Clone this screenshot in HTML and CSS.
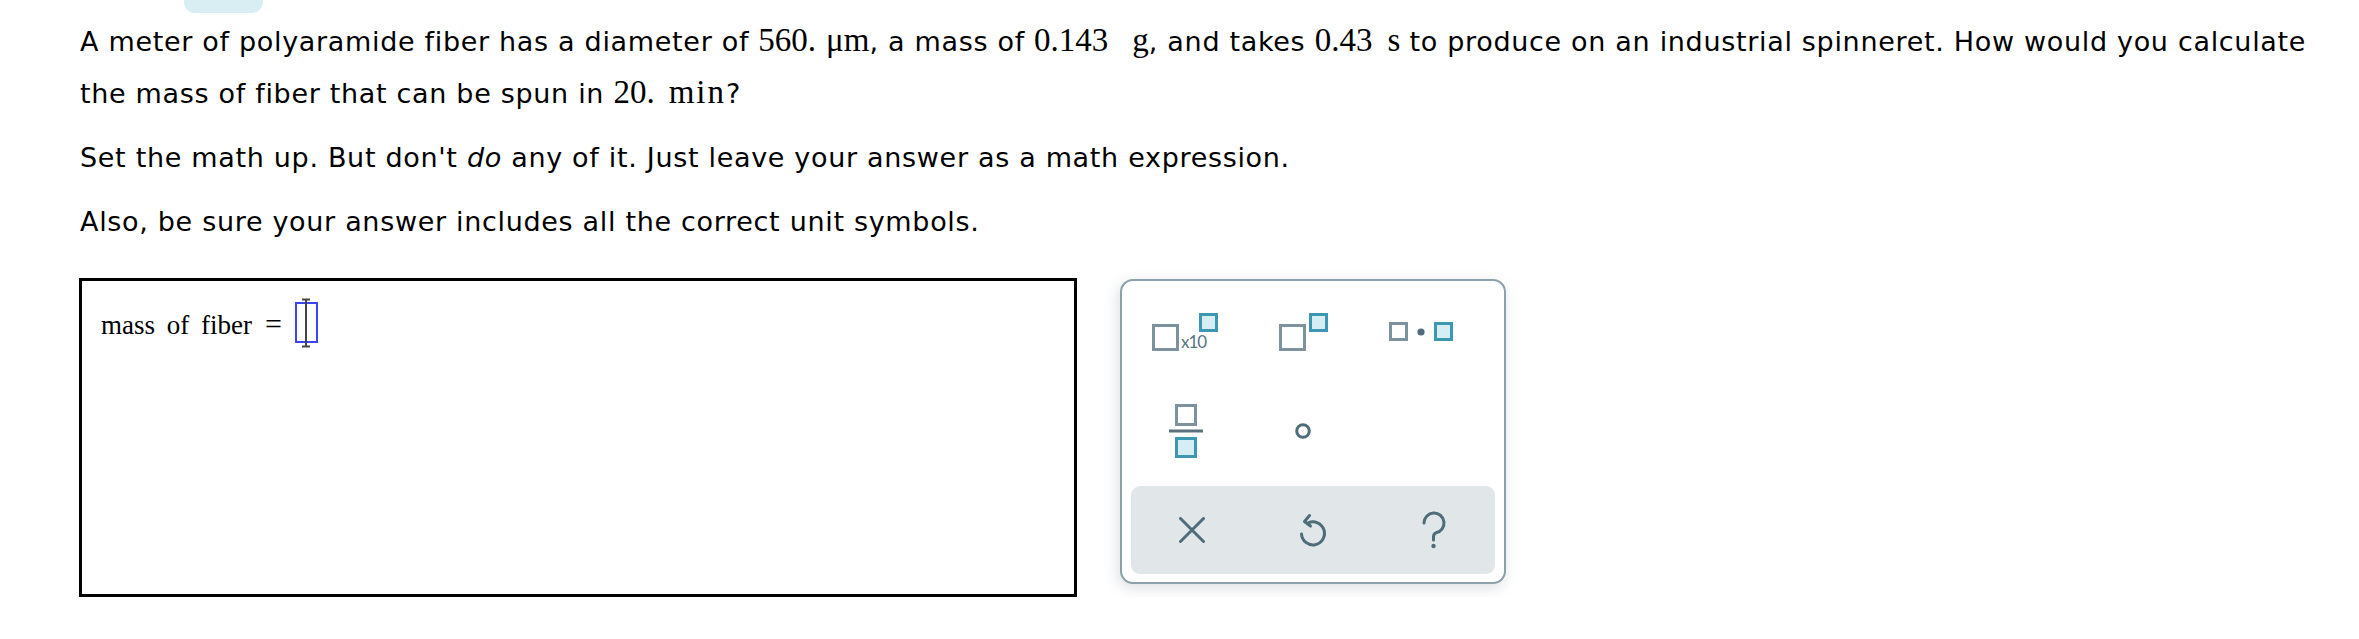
FILE: index.html
```html
<!DOCTYPE html>
<html>
<head>
<meta charset="utf-8">
<link rel="stylesheet" href="styles.css">
</head>
<body>
<div class="tab"></div>
<div class="question">
  <p class="para">A meter of polyaramide fiber has a diameter of <span class="m">560.</span><span class="m u1">μm</span>, a mass of <span class="m">0.143</span><span class="m u2">g</span>, and takes <span class="m">0.43</span><span class="m u3">s</span> to produce on an industrial spinneret. How would you calculate the mass of fiber that can be spun in <span class="m">20.</span><span class="m u4">min</span>?</p>
  <p class="para">Set the math up. But don't <em>do</em> any of it. Just leave your answer as a math expression.</p>
  <p class="para">Also, be sure your answer includes all the correct unit symbols.</p>
</div>
<div class="answer-row">
  <div class="answer-box">
    <div class="eq"><span class="lbl">mass of fiber</span><span class="equals">=</span><span class="slot"><svg class="ibeam" width="12" height="50" viewBox="0 0 12 50"><path d="M2 1.5 H10 M6 1.5 V48.5 M2 48.5 H10" stroke="#444" stroke-width="2" fill="none"/></svg></span></div>
  </div>
  <div class="palette">
    <div class="cell">
      <svg width="80" height="38" viewBox="0 0 80 38">
        <rect x="1.5" y="12.5" width="24" height="24" class="g"/>
        <text x="29" y="35" class="x10">x10</text>
        <rect x="48.5" y="1.5" width="16" height="16" class="b"/>
      </svg>
    </div>
    <div class="cell">
      <svg width="68" height="38" viewBox="0 0 68 38">
        <rect x="1.5" y="12.5" width="24" height="24" class="g"/>
        <rect x="31.5" y="1.5" width="16" height="16" class="b"/>
      </svg>
    </div>
    <div class="cell">
      <svg width="90" height="20" viewBox="0 0 90 20">
        <rect x="1.5" y="1.5" width="16" height="16" class="g"/>
        <circle cx="32" cy="10" r="3.6" class="dot"/>
        <rect x="46.5" y="1.5" width="16" height="16" class="b"/>
      </svg>
    </div>
    <div class="cell">
      <svg width="46" height="54" viewBox="0 0 46 54">
        <rect x="7.5" y="1.5" width="19" height="19" class="g"/>
        <path d="M0 27 H34" class="ln"/>
        <rect x="7.5" y="34.5" width="19" height="18" class="b"/>
      </svg>
    </div>
    <div class="cell">
      <svg width="56" height="20" viewBox="0 0 56 20">
        <circle cx="18" cy="10" r="6.3" class="deg"/>
      </svg>
    </div>
    <div class="cell"></div>
    <div class="tools">
      <div class="tool">
        <svg width="26" height="26" viewBox="0 0 26 26"><path d="M1.5 1.5 L24.5 24.5 M24.5 1.5 L1.5 24.5" class="ic"/></svg>
      </div>
      <div class="tool">
        <svg width="30" height="36" viewBox="0 0 30 36"><path d="M10 11 A11.5 11.5 0 1 1 3.5 22" class="ic"/><path d="M11.5 3.5 L6.5 9.5 L12.5 14" class="ic"/></svg>
      </div>
      <div class="tool">
        <svg width="26" height="38" viewBox="0 0 26 38"><path d="M3 12 A10 10 0 1 1 15 21.8 C13.5 22.3 12.5 23.5 12.5 26 V29" class="ic"/><circle cx="12.5" cy="35" r="2.2" class="dot"/></svg>
      </div>
    </div>
  </div>
</div>
</body>
</html>
```
FILE: styles.css
```css
html, body {
  margin: 0;
  padding: 0;
  background: #ffffff;
}
body {
  padding: 0 30px 0 80px;
  font-family: "DejaVu Sans", Verdana, sans-serif;
  font-size: 27px;
  color: #000;
}
.tab {
  margin-left: 104px;
  width: 79px;
  height: 13px;
  background: #d8eef3;
  border-radius: 0 0 11px 11px;
}
.question {
  padding-top: 2px;
}
.para {
  margin: 0 0 14px 0;
  line-height: 50px;
  letter-spacing: 0.68px;
}
.para em {
  font-style: italic;
}
.m {
  font-family: "Liberation Serif", "Times New Roman", serif;
  font-size: 33px;
  letter-spacing: 0;
}
.u1 {
  margin-left: 10px;
}
.u2 {
  margin-left: 24px;
}
.u3 {
  margin-left: 15px;
}
.u4 {
  margin-left: 14px;
  letter-spacing: 2px;
}
.answer-row {
  display: flex;
  align-items: flex-start;
  margin-top: 31px;
  margin-left: -1px;
}
.answer-box {
  box-sizing: border-box;
  width: 998px;
  height: 319px;
  border: 3px solid #000;
  padding: 21px 0 0 19px;
}
.eq {
  font-family: "Liberation Serif", "Times New Roman", serif;
  font-size: 27px;
  line-height: 36px;
  color: #000;
}
.lbl {
  word-spacing: 5px;
}
.equals {
  margin-left: 13px;
  font-size: 30px;
}
.slot {
  position: relative;
  display: inline-block;
  box-sizing: border-box;
  width: 23px;
  height: 41px;
  border: 2px solid #3a45f5;
  margin-left: 13px;
  vertical-align: -9px;
}
.ibeam {
  position: absolute;
  left: 3.5px;
  top: -6px;
}
.palette {
  box-sizing: border-box;
  width: 386px;
  height: 305px;
  margin-left: 43px;
  margin-top: 1px;
  border: 2px solid #8ca0aa;
  border-radius: 13px;
  background: #fff;
  box-shadow: -2px 4px 14px rgba(60, 80, 90, 0.18);
  padding: 2px 9px 8px 9px;
  display: grid;
  grid-template-columns: 1fr 1fr 1fr;
  grid-template-rows: 98px 100px 88px;
  row-gap: 0;
}
.cell {
  display: flex;
  align-items: center;
  justify-content: center;
}
.tools {
  grid-column: 1 / 4;
  margin-top: 5px;
  height: 88px;
  background: #e1e6e9;
  border-radius: 9px;
  display: grid;
  grid-template-columns: 1fr 1fr 1fr;
}
.tool {
  display: flex;
  align-items: center;
  justify-content: center;
}
svg {
  display: block;
}
.g {
  fill: #ffffff;
  stroke: #7d929c;
  stroke-width: 3;
}
.b {
  fill: #d6eef3;
  stroke: #3d97b2;
  stroke-width: 3;
}
.dot {
  fill: #4e6c79;
}
.ln {
  stroke: #5a717c;
  stroke-width: 3;
  fill: none;
}
.deg {
  fill: none;
  stroke: #4e6c79;
  stroke-width: 3;
}
.ic {
  fill: none;
  stroke: #4e6c79;
  stroke-width: 3;
  stroke-linecap: round;
  stroke-linejoin: round;
}
.x10 {
  font-family: "Lato", "Open Sans", sans-serif;
  font-size: 17px;
  letter-spacing: -1px;
  fill: #557582;
}
```
